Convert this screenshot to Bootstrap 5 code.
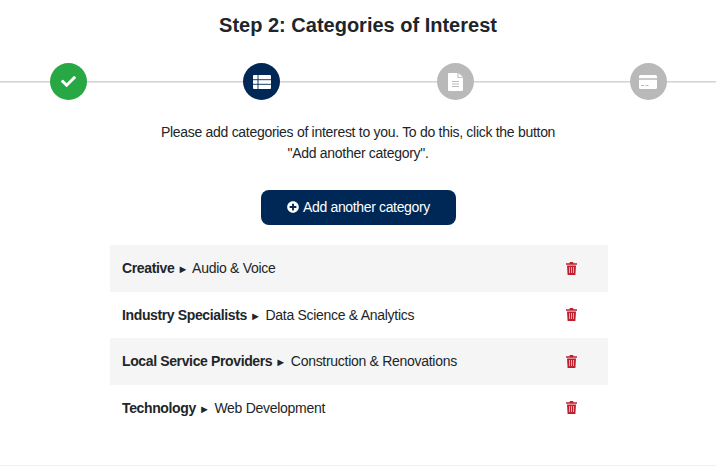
<!DOCTYPE html>
<html lang="en">
<head>
    <meta charset="UTF-8">
    <title>Step 2: Categories of Interest</title>
    <link href="https://cdn.jsdelivr.net/npm/bootstrap@5.3.0/dist/css/bootstrap.min.css" rel="stylesheet">
    <style>
        body { font-family: "Liberation Sans", Arial, sans-serif; color: #212529; font-size: 14px; letter-spacing: -0.29px; height: 466px; overflow: hidden; }
        .wiz-title { font-size: 20px; font-weight: 700; line-height: 24px; padding-top: 13px; margin: 0; color: #212529; letter-spacing: 0; }
        .wiz-steps { margin-top: 26px; padding: 0 49px 0 50px; }
        .wiz-steps::before { content: ""; position: absolute; left: 0; right: 0; top: 18px; border-top: 1px solid #d4d4d4; border-bottom: 1px solid #e6e6e6; }
        .wiz-dot { width: 37px; height: 37px; border-radius: 50%; z-index: 1; }
        .dot-done { background: #28a745; }
        .dot-now { background: #002856; }
        .dot-next { background: #b9b9b9; }
        .wiz-intro { margin-top: 22px; line-height: 21px; }
        .btn-add { background: #002856; color: #fff; width: 195px; height: 35px; border-radius: 8px; font-size: 14px; letter-spacing: -0.35px; padding: 0; margin-top: 26px; margin-left: 1px; }
        .btn-add:hover { background: #002856; color: #fff; }
        .cat-list { width: 498.500px; margin: 20px auto 0 109.500px; }
        .cat-row { height: 46.500px; padding: 0 31px 0 12.500px; }
        .cat-row:nth-child(odd) { background: #f5f5f5; }
        .cat-row b { letter-spacing: -0.37px; }
        .cat-arrow { font-size: 11px; margin: 0 1px 0 -0.500px; letter-spacing: 0; }
        .cat-text { position: relative; top: .5px; }
        .page-end { position: absolute; left: 0; right: 0; bottom: 0; border-top: 1px solid #f0f0f0; }
    </style>
</head>
<body>
<h1 class="wiz-title text-center">Step 2: Categories of Interest</h1>

<div class="wiz-steps position-relative d-flex justify-content-between">
    <div class="wiz-dot dot-done d-flex align-items-center justify-content-center">
        <svg width="15" height="15" viewBox="0 0 512 512" fill="#fff"><path d="M173.898 439.404l-166.4-166.4c-9.997-9.997-9.997-26.206 0-36.204l36.203-36.204c9.997-9.998 26.207-9.998 36.204 0L192 312.69 432.095 72.596c9.997-9.997 26.207-9.997 36.204 0l36.203 36.204c9.997 9.997 9.997 26.206 0 36.204l-294.4 294.401c-9.998 9.997-26.207 9.997-36.204-.001z"/></svg>
    </div>
    <div class="wiz-dot dot-now d-flex align-items-center justify-content-center">
        <svg width="18" height="14" viewBox="0 0 18 14" fill="#fff"><path d="M1 0h16a1 1 0 0 1 1 1v12a1 1 0 0 1-1 1H1a1 1 0 0 1-1-1V1a1 1 0 0 1 1-1z"/><path d="M5 0v14M0 4.700h18M0 9.300h18" stroke="#002856" stroke-width=".9" fill="none"/></svg>
    </div>
    <div class="wiz-dot dot-next d-flex align-items-center justify-content-center">
        <svg width="15" height="18" viewBox="0 0 15 18"><path d="M1 0h8.500v5H15v12a1 1 0 0 1-1 1H1a1 1 0 0 1-1-1V1a1 1 0 0 1 1-1z" fill="#fff"/><path d="M10.500 0L15 4.200h-4.500z" fill="#fff"/><path d="M4 8.500h7M4 11h7M4 13.500h7" stroke="#b9b9b9" stroke-width="1"/></svg>
    </div>
    <div class="wiz-dot dot-next d-flex align-items-center justify-content-center">
        <svg width="18" height="14" viewBox="0 0 18 14"><rect width="18" height="14" rx="1.500" fill="#fff"/><path d="M0 4h18" stroke="#b9b9b9" stroke-width="1.500"/><path d="M2 10.500h3M6.500 10.500h3" stroke="#b9b9b9" stroke-width="1.200"/></svg>
    </div>
</div>

<p class="wiz-intro text-center mb-0">Please add categories of interest to you. To do this, click the button<br>"Add another category".</p>

<div class="text-center">
    <button type="button" class="btn btn-add">
        <svg class="me-1" width="12" height="12" viewBox="0 0 512 512" fill="#fff" style="vertical-align:-1px"><path d="M256 8C119 8 8 119 8 256s111 248 248 248 248-111 248-248S393 8 256 8zm144 276c0 6.600-5.400 12-12 12h-92v92c0 6.600-5.400 12-12 12h-56c-6.600 0-12-5.400-12-12v-92h-92c-6.600 0-12-5.400-12-12v-56c0-6.600 5.400-12 12-12h92v-92c0-6.600 5.400-12 12-12h56c6.600 0 12 5.400 12 12v92h92c6.600 0 12 5.400 12 12v56z"/></svg>Add another category
    </button>
</div>

<div class="cat-list">
    <div class="cat-row d-flex align-items-center justify-content-between">
        <div class="cat-text"><b>Creative</b> <span class="cat-arrow">►</span> Audio &amp; Voice</div>
        <svg width="11" height="13" viewBox="0 0 11 13"><path d="M4 0h3l.6 1.200H11v1.500H0V1.200h3.400zM1 3.500h9l-.6 9.500H1.600z" fill="#bf2030"/><path d="M3.500 5v6M5.500 5v6M7.500 5v6" stroke="#f0b8bc" stroke-width=".9"/></svg>
    </div>
    <div class="cat-row d-flex align-items-center justify-content-between">
        <div class="cat-text"><b>Industry Specialists</b> <span class="cat-arrow">►</span> Data Science &amp; Analytics</div>
        <svg width="11" height="13" viewBox="0 0 11 13"><path d="M4 0h3l.6 1.200H11v1.500H0V1.200h3.400zM1 3.500h9l-.6 9.500H1.600z" fill="#bf2030"/><path d="M3.500 5v6M5.500 5v6M7.500 5v6" stroke="#f0b8bc" stroke-width=".9"/></svg>
    </div>
    <div class="cat-row d-flex align-items-center justify-content-between">
        <div class="cat-text"><b>Local Service Providers</b> <span class="cat-arrow">►</span> Construction &amp; Renovations</div>
        <svg width="11" height="13" viewBox="0 0 11 13"><path d="M4 0h3l.6 1.200H11v1.500H0V1.200h3.400zM1 3.500h9l-.6 9.500H1.600z" fill="#bf2030"/><path d="M3.500 5v6M5.500 5v6M7.500 5v6" stroke="#f0b8bc" stroke-width=".9"/></svg>
    </div>
    <div class="cat-row d-flex align-items-center justify-content-between">
        <div class="cat-text"><b>Technology</b> <span class="cat-arrow">►</span> Web Development</div>
        <svg width="11" height="13" viewBox="0 0 11 13"><path d="M4 0h3l.6 1.200H11v1.500H0V1.200h3.400zM1 3.500h9l-.6 9.500H1.600z" fill="#bf2030"/><path d="M3.500 5v6M5.500 5v6M7.500 5v6" stroke="#f0b8bc" stroke-width=".9"/></svg>
    </div>
</div>
<div class="page-end"></div>

<script src="https://cdn.jsdelivr.net/npm/bootstrap@5.3.0/dist/js/bootstrap.bundle.min.js"></script>
</body>
</html>
